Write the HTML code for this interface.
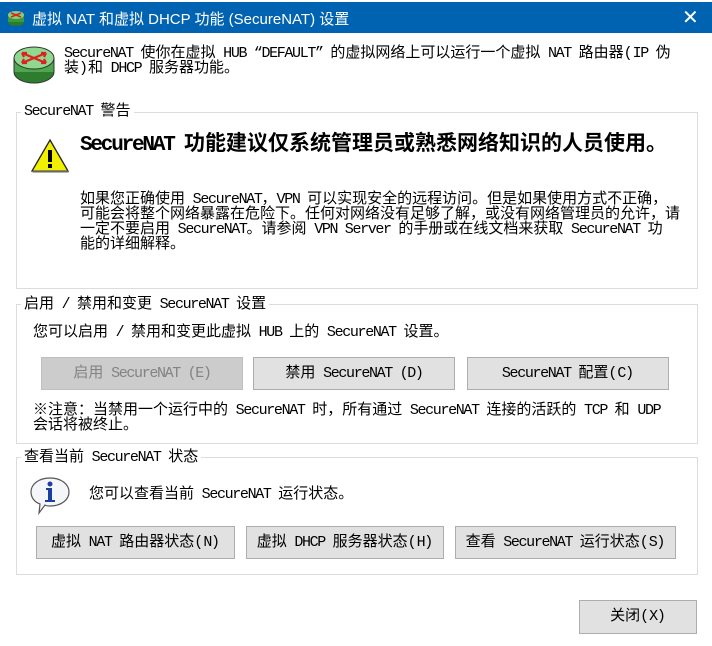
<!DOCTYPE html>
<html><head><meta charset="utf-8"><style>
*{margin:0;padding:0;box-sizing:border-box}
body{width:712px;height:646px;background:#fff;position:relative;overflow:hidden;font-family:"Liberation Mono","Noto Sans CJK SC",monospace;font-size:15px;color:#000}
.a{position:absolute;white-space:nowrap}
.t{line-height:15px}
.title{position:absolute;left:0;top:2px;width:712px;height:31px;background:#0063b1;color:#fff;font-family:"Liberation Sans","Noto Sans CJK SC",sans-serif;font-size:15px}
.g{position:absolute;border:1px solid #dcdcdc}
.gl{position:absolute;background:#fff;padding:0 3px;line-height:14px}
.btn{position:absolute;background:#e1e1e1;border:1px solid #adadad;text-align:center;line-height:31px}
.m{letter-spacing:-1.35px}
.h .m{letter-spacing:-2.2px}
</style></head><body>
<div style="position:absolute;left:0;top:0;width:712px;height:2px;background:#fff"></div>
<div class="title">
<svg style="position:absolute;left:6px;top:6px" width="20" height="20" viewBox="0 0 20 20"><ellipse cx="10" cy="14" rx="8" ry="4" fill="#2c7a2c"/><rect x="2" y="7" width="16" height="7" fill="#3a9a3a"/><ellipse cx="10" cy="7" rx="8" ry="4" fill="#7fd07f"/><path d="M5 5l10 4M15 5l-10 4" stroke="#d22" stroke-width="1.5"/></svg>
<span class="a" style="left:32px;top:6px">虚拟 NAT 和虚拟 DHCP 功能 (SecureNAT) 设置</span>
<span class="a" style="left:682px;top:3px;font-size:20px;font-weight:300">✕</span>
</div>
<svg style="position:absolute;left:13px;top:42px" width="44" height="44" viewBox="0 0 44 44"><ellipse cx="21" cy="30" rx="20" ry="11" fill="#2e7d2e" stroke="#333"/><rect x="1" y="16" width="40" height="14" fill="#4ea64e"/><line x1="1" y1="16" x2="1" y2="30" stroke="#333"/><line x1="41" y1="16" x2="41" y2="30" stroke="#333"/><ellipse cx="21" cy="16" rx="20" ry="11" fill="#8fd88f" stroke="#333"/><path d="M9 11l24 10M33 11l-24 10M9 11l5 0M9 11l2 4M33 21l-5 0M33 21l-2-4M33 11l-5 0M33 11l-2 4M9 21l5 0M9 21l2-4" stroke="#e02020" stroke-width="2.2" fill="none"/></svg>
<div class="a t" style="left:64px;top:46px"><span class="m">SecureNAT </span>使你在虚拟<span class="m"> HUB “DEFAULT” </span>的虚拟网络上可以运行一个虚拟<span class="m"> NAT </span>路由器(<span class="m">IP </span>伪<br>装)和<span class="m"> DHCP </span>服务器功能。</div>

<div class="g" style="left:16px;top:112px;width:682px;height:177px"></div>
<div class="gl" style="left:21px;top:105px"><span class="m">SecureNAT </span>警告</div>
<svg style="position:absolute;left:30px;top:138px" width="40" height="36" viewBox="0 0 40 36"><path d="M20 2L38 33H2Z" fill="#f0f000" stroke="#222" stroke-width="1.3"/><path d="M2.5 33.5H38.5" stroke="#666" stroke-width="2"/><rect x="18" y="12" width="4" height="12" fill="#000"/><rect x="18" y="26" width="4" height="4" fill="#000"/></svg>
<div class="a h" style="left:80px;top:134px;font-size:21px;font-weight:bold;line-height:24px"><span class="m">SecureNAT </span>功能建议仅系统管理员或熟悉网络知识的人员使用。</div>
<div class="a t" style="left:80px;top:192px">如果您正确使用<span class="m"> SecureNAT</span>，<span class="m">VPN </span>可以实现安全的远程访问。但是如果使用方式不正确，<br>可能会将整个网络暴露在危险下。任何对网络没有足够了解，或没有网络管理员的允许，请<br>一定不要启用<span class="m"> SecureNAT</span>。请参阅<span class="m"> VPN Server </span>的手册或在线文档来获取<span class="m"> SecureNAT </span>功<br>能的详细解释。</div>

<div class="g" style="left:16px;top:304px;width:682px;height:140px"></div>
<div class="gl" style="left:21px;top:298px">启用<span class="m"> / </span>禁用和变更<span class="m"> SecureNAT </span>设置</div>
<div class="a t" style="left:33px;top:325px">您可以启用<span class="m"> / </span>禁用和变更此虚拟<span class="m"> HUB </span>上的<span class="m"> SecureNAT </span>设置。</div>
<div class="btn" style="left:41px;top:357px;width:202px;height:33px;background:#ccc;border-color:#bfbfbf;color:#838383">启用<span class="m"> SecureNAT (E)</span></div>
<div class="btn" style="left:253px;top:357px;width:202px;height:33px">禁用<span class="m"> SecureNAT (D)</span></div>
<div class="btn" style="left:467px;top:357px;width:202px;height:33px"><span class="m">SecureNAT </span>配置(<span class="m">C</span>)</div>
<div class="a t" style="left:33px;top:403px">※注意：当禁用一个运行中的<span class="m"> SecureNAT </span>时，所有通过<span class="m"> SecureNAT </span>连接的活跃的<span class="m"> TCP </span>和<span class="m"> UDP</span><br>会话将被终止。</div>

<div class="g" style="left:16px;top:457px;width:682px;height:118px"></div>
<div class="gl" style="left:21px;top:451px">查看当前<span class="m"> SecureNAT </span>状态</div>
<svg style="position:absolute;left:29px;top:475px" width="42" height="42" viewBox="0 0 42 42"><path d="M21 3C32 3 40 9 40 17S32 31 21 31C19 31 17 31 16 30L10 38L11 29C5 27 2 22 2 17C2 9 10 3 21 3Z" fill="#f4f6fa" stroke="#555" stroke-width="1.2"/><circle cx="21" cy="9" r="2.5" fill="#1a3fa0"/><path d="M17 13h6v12h3v2h-10v-2h3v-10h-2z" fill="#1a3fa0"/></svg>
<div class="a t" style="left:89px;top:487px">您可以查看当前<span class="m"> SecureNAT </span>运行状态。</div>
<div class="btn" style="left:36px;top:526px;width:199px;height:33px">虚拟<span class="m"> NAT </span>路由器状态(<span class="m">N</span>)</div>
<div class="btn" style="left:246px;top:526px;width:198px;height:33px">虚拟<span class="m"> DHCP </span>服务器状态(<span class="m">H</span>)</div>
<div class="btn" style="left:455px;top:526px;width:221px;height:33px">查看<span class="m"> SecureNAT </span>运行状态(<span class="m">S</span>)</div>

<div class="btn" style="left:579px;top:600px;width:118px;height:34px;line-height:32px">关闭(<span class="m">X</span>)</div>
</body></html>
